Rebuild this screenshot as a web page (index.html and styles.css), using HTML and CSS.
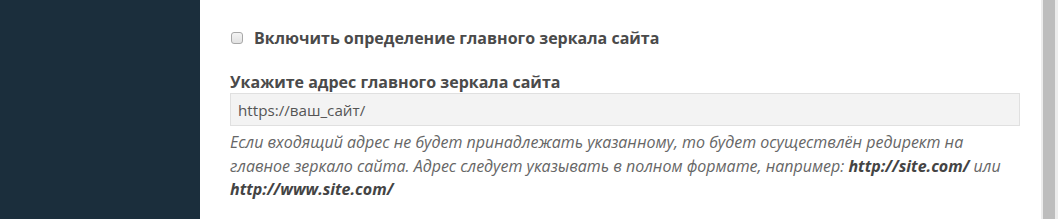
FILE: index.html
```html
<!DOCTYPE html>
<html lang="ru">
<head>
  <meta charset="UTF-8">
  <title>Главное зеркало сайта</title>
  <link rel="stylesheet" href="styles.css">
</head>
<body>
  <div class="layout">
    <aside class="sidebar"></aside>
    <main class="content">
      <label class="check-row">
        <input type="checkbox" class="check">
        <span>Включить определение главного зеркала сайта</span>
      </label>

      <div class="field">
        <label class="field-label" for="mirror">Укажите адрес главного зеркала сайта</label>
        <input type="text" id="mirror" class="field-input" value="https://ваш_сайт/">
        <p class="hint">
          Если входящий адрес не будет принадлежать указанному, то будет осуществлён редирект на
          главное зеркало сайта. Адрес следует указывать в полном формате, например: <b>http://site.com/</b> или
          <b>http://www.site.com/</b>
        </p>
      </div>
    </main>
    <div class="scrollbar"><div class="thumb"></div></div>
  </div>
</body>
</html>
```

FILE: styles.css
```css
* {
  margin: 0;
  padding: 0;
  box-sizing: border-box;
}

body {
  font-family: 'Open Sans', sans-serif;
  color: #4a4a4a;
  background: #fff;
  overflow: hidden;
}

.layout {
  display: flex;
  height: 219px;
}

.sidebar {
  width: 200px;
  flex-shrink: 0;
  background: #1b2e3c;
}

.content {
  flex: 1;
  padding: 27px 21px 0 30px;
}

.check-row {
  display: flex;
  align-items: center;
  gap: 11px;
  font-size: 16px;
  font-weight: 700;
  line-height: 22px;
  color: #4a4a4a;
}

.check {
  appearance: none;
  width: 12px;
  height: 12px;
  margin-left: 1px;
  border: 1px solid #a8a8a8;
  border-radius: 3px;
  background: linear-gradient(#f4f4f4, #e2e2e2);
}

.field {
  margin-top: 23px;
}

.field-label {
  display: block;
  font-size: 16px;
  font-weight: 700;
  line-height: 21px;
  color: #4a4a4a;
}

.field-input {
  display: block;
  width: 100%;
  height: 33px;
  padding: 0 7px;
  background: #f3f3f3;
  border: 1px solid #e0e0e0;
  font-family: inherit;
  font-size: 15.2px;
  color: #555;
  outline: none;
}

.hint {
  margin-top: 5px;
  font-size: 16px;
  font-style: italic;
  line-height: 23.5px;
  color: #666;
}

.hint b {
  color: #444;
}

.scrollbar {
  width: 17px;
  flex-shrink: 0;
  padding: 0 3px 0 2px;
  background: #ececec;
}

.thumb {
  height: 100%;
  background: #bdbdbd;
}
```
